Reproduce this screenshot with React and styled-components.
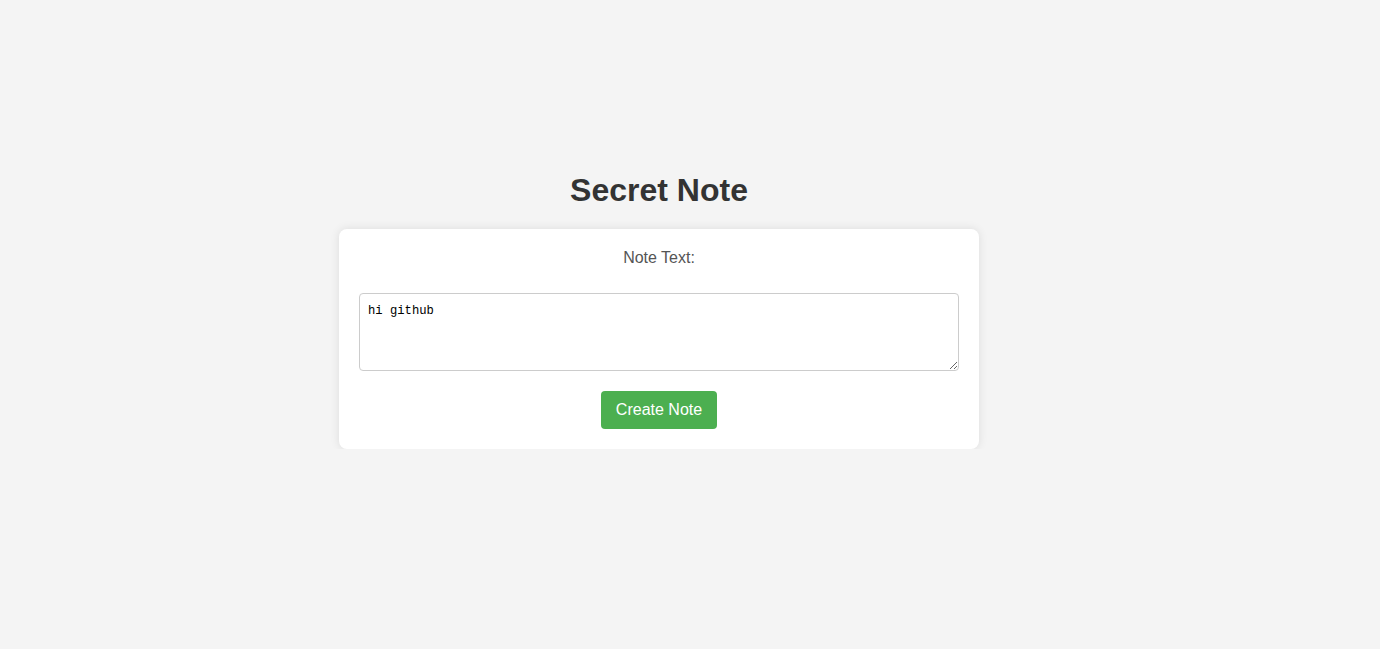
import React, { useState } from "react";
import styled, { createGlobalStyle } from "styled-components";

const GlobalStyle = createGlobalStyle`
  body {
    margin: 0;
    background: #f4f4f4;
    font-family: Arial, "Liberation Sans", sans-serif;
  }
`;

const Page = styled.div`
  display: flex;
  flex-direction: column;
  align-items: center;
  padding: 149px 62px 0 0;
`;

const Title = styled.h1`
  margin: 23px 0 20px 0;
  font-size: 32px;
  line-height: 37px;
  font-weight: bold;
  color: #333;
`;

const Card = styled.form`
  width: 600px;
  padding: 20px;
  background: #fff;
  border-radius: 8px;
  box-shadow: 0 0 10px rgba(0, 0, 0, 0.1);
  display: flex;
  flex-direction: column;
  align-items: center;
`;

const Label = styled.label`
  display: block;
  font-size: 16px;
  line-height: 18px;
  color: #555;
  margin-bottom: 26px;
`;

const NoteInput = styled.textarea`
  display: block;
  box-sizing: border-box;
  width: 100%;
  height: 78px;
  padding: 8px;
  border: 1px solid #ccc;
  border-radius: 4px;
  font-family: "Liberation Mono", "DejaVu Sans Mono", monospace;
  font-size: 12.2px;
  line-height: 19px;
  color: #000;
  margin: 0 0 20px 0;
`;

const Button = styled.button`
  padding: 10px 15px;
  font-family: Arial, "Liberation Sans", sans-serif;
  font-size: 16px;
  line-height: 18px;
  color: #fff;
  background: #4caf50;
  border: none;
  border-radius: 4px;
  cursor: pointer;

  &:hover {
    background: #45a049;
  }
`;

export default function App() {
  const [text, setText] = useState("hi github");

  return (
    <>
      <GlobalStyle />
      <Page>
        <Title>Secret Note</Title>
        <Card onSubmit={(e) => e.preventDefault()}>
          <Label htmlFor="note">Note Text:</Label>
          <NoteInput id="note" rows={4} value={text} onChange={(e) => setText(e.target.value)} />
          <Button type="submit">Create Note</Button>
        </Card>
      </Page>
    </>
  );
}
